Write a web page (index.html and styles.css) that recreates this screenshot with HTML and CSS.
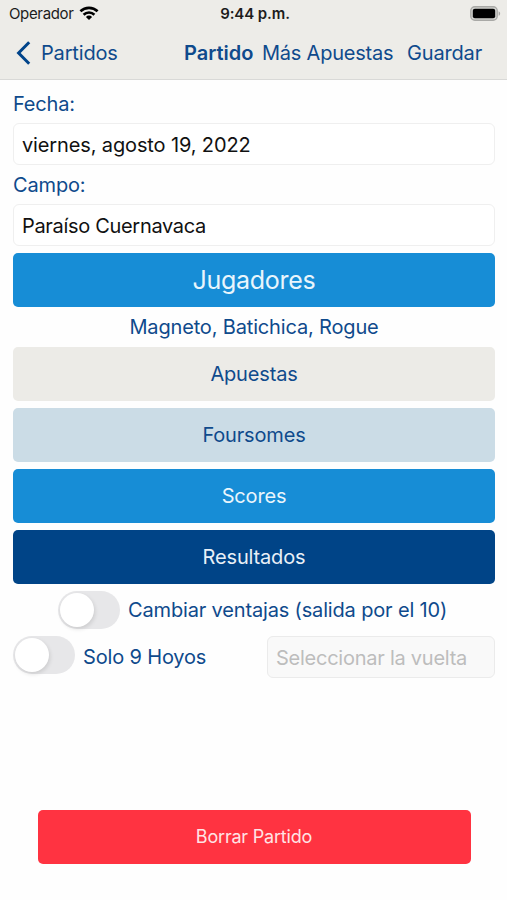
FILE: index.html
```html
<!DOCTYPE html>
<html lang="es">
<head>
    <meta charset="UTF-8">
    <meta name="viewport" content="width=device-width, initial-scale=1.0">
    <title>Partido</title>
    <link rel="stylesheet" href="styles.css">
</head>
<body>
    <header class="header">
        <div class="status-bar">
            <div class="carrier">
                <span>Operador</span>
                <svg class="wifi" width="20" height="14" viewBox="0 0 20 14" fill="none" stroke="#000" stroke-width="2.6">
                    <path d="M1.4 5.3A12.4 12.4 0 0 1 18.6 5.3"/>
                    <path d="M4.6 8.7A7.8 7.8 0 0 1 15.4 8.7"/>
                    <path d="M10 14L6.9 10.9A4.4 4.4 0 0 1 13.1 10.9Z" fill="#000" stroke="none"/>
                </svg>
            </div>
            <span class="clock">9:44 p.m.</span>
            <svg class="battery" width="31" height="15" viewBox="0 0 31 15">
                <rect x="0.8" y="0.8" width="26.4" height="13.4" rx="4" fill="#d4d4d1" stroke="#a9a9a6" stroke-width="1.4"/>
                <rect x="2.8" y="2.8" width="22.4" height="9.4" rx="2" fill="#000"/>
                <path d="M28.6 5.2C30.6 6 30.6 9 28.6 9.8Z" fill="#a6a6a3"/>
            </svg>
        </div>
        <nav class="nav">
            <a class="back">
                <svg width="15" height="24" viewBox="0 0 15 24" fill="none" stroke="#00448a" stroke-width="3">
                    <path d="M13.2 1.3L2.6 12L13.2 22.7"/>
                </svg>
                <span>Partidos</span>
            </a>
            <span class="title">Partido</span>
            <a class="more">Más Apuestas</a>
            <a class="save">Guardar</a>
        </nav>
    </header>
    <main class="content">
        <label class="label">Fecha:</label>
        <div class="field date">viernes, agosto 19, 2022</div>
        <label class="label">Campo:</label>
        <div class="field course">Paraíso Cuernavaca</div>
        <div class="btn btn-players">Jugadores</div>
        <div class="players">Magneto, Batichica, Rogue</div>
        <div class="buttons">
            <div class="btn btn-bets">Apuestas</div>
            <div class="btn btn-foursomes">Foursomes</div>
            <div class="btn btn-scores">Scores</div>
            <div class="btn btn-results">Resultados</div>
        </div>
        <div class="switch-row">
            <span class="toggle"></span>
            <span class="switch-text">Cambiar ventajas (salida por el 10)</span>
        </div>
        <div class="holes-row">
            <span class="toggle"></span>
            <span class="holes-text">Solo 9 Hoyos</span>
            <div class="field disabled">Seleccionar la vuelta</div>
        </div>
        <div class="btn btn-delete">Borrar Partido</div>
    </main>
</body>
</html>
```
FILE: styles.css
```css
* {
    box-sizing: border-box;
}
body {
    margin: 0;
    height: 900px;
    background: #fefefe;
    color: #0f4a8c;
    font-family: 'Inter', 'Liberation Sans', sans-serif;
    font-size: 20px;
    letter-spacing: -0.16px;
    line-height: 24px;
    white-space: nowrap;
    overflow: hidden;
}
.header {
    height: 80px;
    background: #edece8;
    border-bottom: 1px solid #d9d9d7;
}
.status-bar {
    display: grid;
    grid-template-columns: 1fr auto 1fr;
    align-items: center;
    height: 28px;
    padding: 0 6px 0 9px;
    color: #1c1c1c;
    font-size: 15px;
}
.carrier {
    display: flex;
    align-items: center;
    gap: 5px;
    letter-spacing: -0.35px;
}
.wifi {
    margin-top: -3px;
}
.clock {
    font-weight: 600;
    letter-spacing: -0.1px;
}
.battery {
    justify-self: end;
    margin-top: -2px;
}
.nav {
    display: flex;
    align-items: center;
    height: 49px;
    padding-left: 16px;
}
.back {
    display: flex;
    align-items: center;
    gap: 10px;
    width: 168px;
}
.title {
    width: 78px;
    font-weight: 600;
    letter-spacing: 0;
}
.more {
    width: 145px;
    letter-spacing: -0.22px;
}
.content {
    display: flex;
    flex-direction: column;
    padding: 12px 12px 0 13px;
}
.label {
    display: block;
    height: 31px;
}
.field {
    height: 42px;
    padding: 0 8px;
    border: 1px solid #efefef;
    border-radius: 6px;
    background: #fff;
    color: #111;
    line-height: 42px;
}
.date {
    margin-bottom: 8px;
    letter-spacing: -0.13px;
}
.course {
    margin-bottom: 7px;
    letter-spacing: -0.32px;
}
.btn {
    height: 53.5px;
    border-radius: 5px;
    line-height: 54px;
    text-align: center;
}
.btn-players {
    background: #178dd6;
    color: #e9f5fc;
    font-size: 25px;
    letter-spacing: -0.3px;
}
.players {
    height: 40.5px;
    line-height: 41px;
    text-align: center;
}
.buttons {
    display: flex;
    flex-direction: column;
    gap: 7.5px;
    margin-bottom: 7.5px;
}
.btn-bets {
    background: #ecebe7;
}
.btn-foursomes {
    background: #cbdce6;
}
.btn-scores {
    background: #178dd6;
    color: #e9f5fc;
}
.btn-results {
    background: #004487;
    color: #e8f0f7;
}
.switch-row {
    display: flex;
    align-items: center;
    gap: 8px;
    height: 38px;
    margin: 0 0 7px 45px;
}
.toggle {
    flex: none;
    display: flex;
    width: 62px;
    height: 38px;
    padding: 2px;
    border-radius: 19px;
    background: #e7e7e9;
}
.toggle::before {
    content: "";
    width: 34px;
    height: 34px;
    border-radius: 50%;
    background: #fff;
    box-shadow: 1px 2px 4px rgba(0, 0, 0, 0.12);
}
.holes-row {
    display: flex;
    height: 42px;
    margin-bottom: 132px;
}
.holes-text {
    width: 184px;
    margin-left: 8px;
    line-height: 43px;
}
.disabled {
    flex: 1;
    border-color: #ebebeb;
    background: #f9f9f9;
    color: #bdbdbd;
    letter-spacing: -0.25px;
}
.btn-delete {
    margin: 0 24.5px;
    background: #ff3341;
    color: #ffe3e5;
    font-size: 18px;
    letter-spacing: -0.2px;
}
```
